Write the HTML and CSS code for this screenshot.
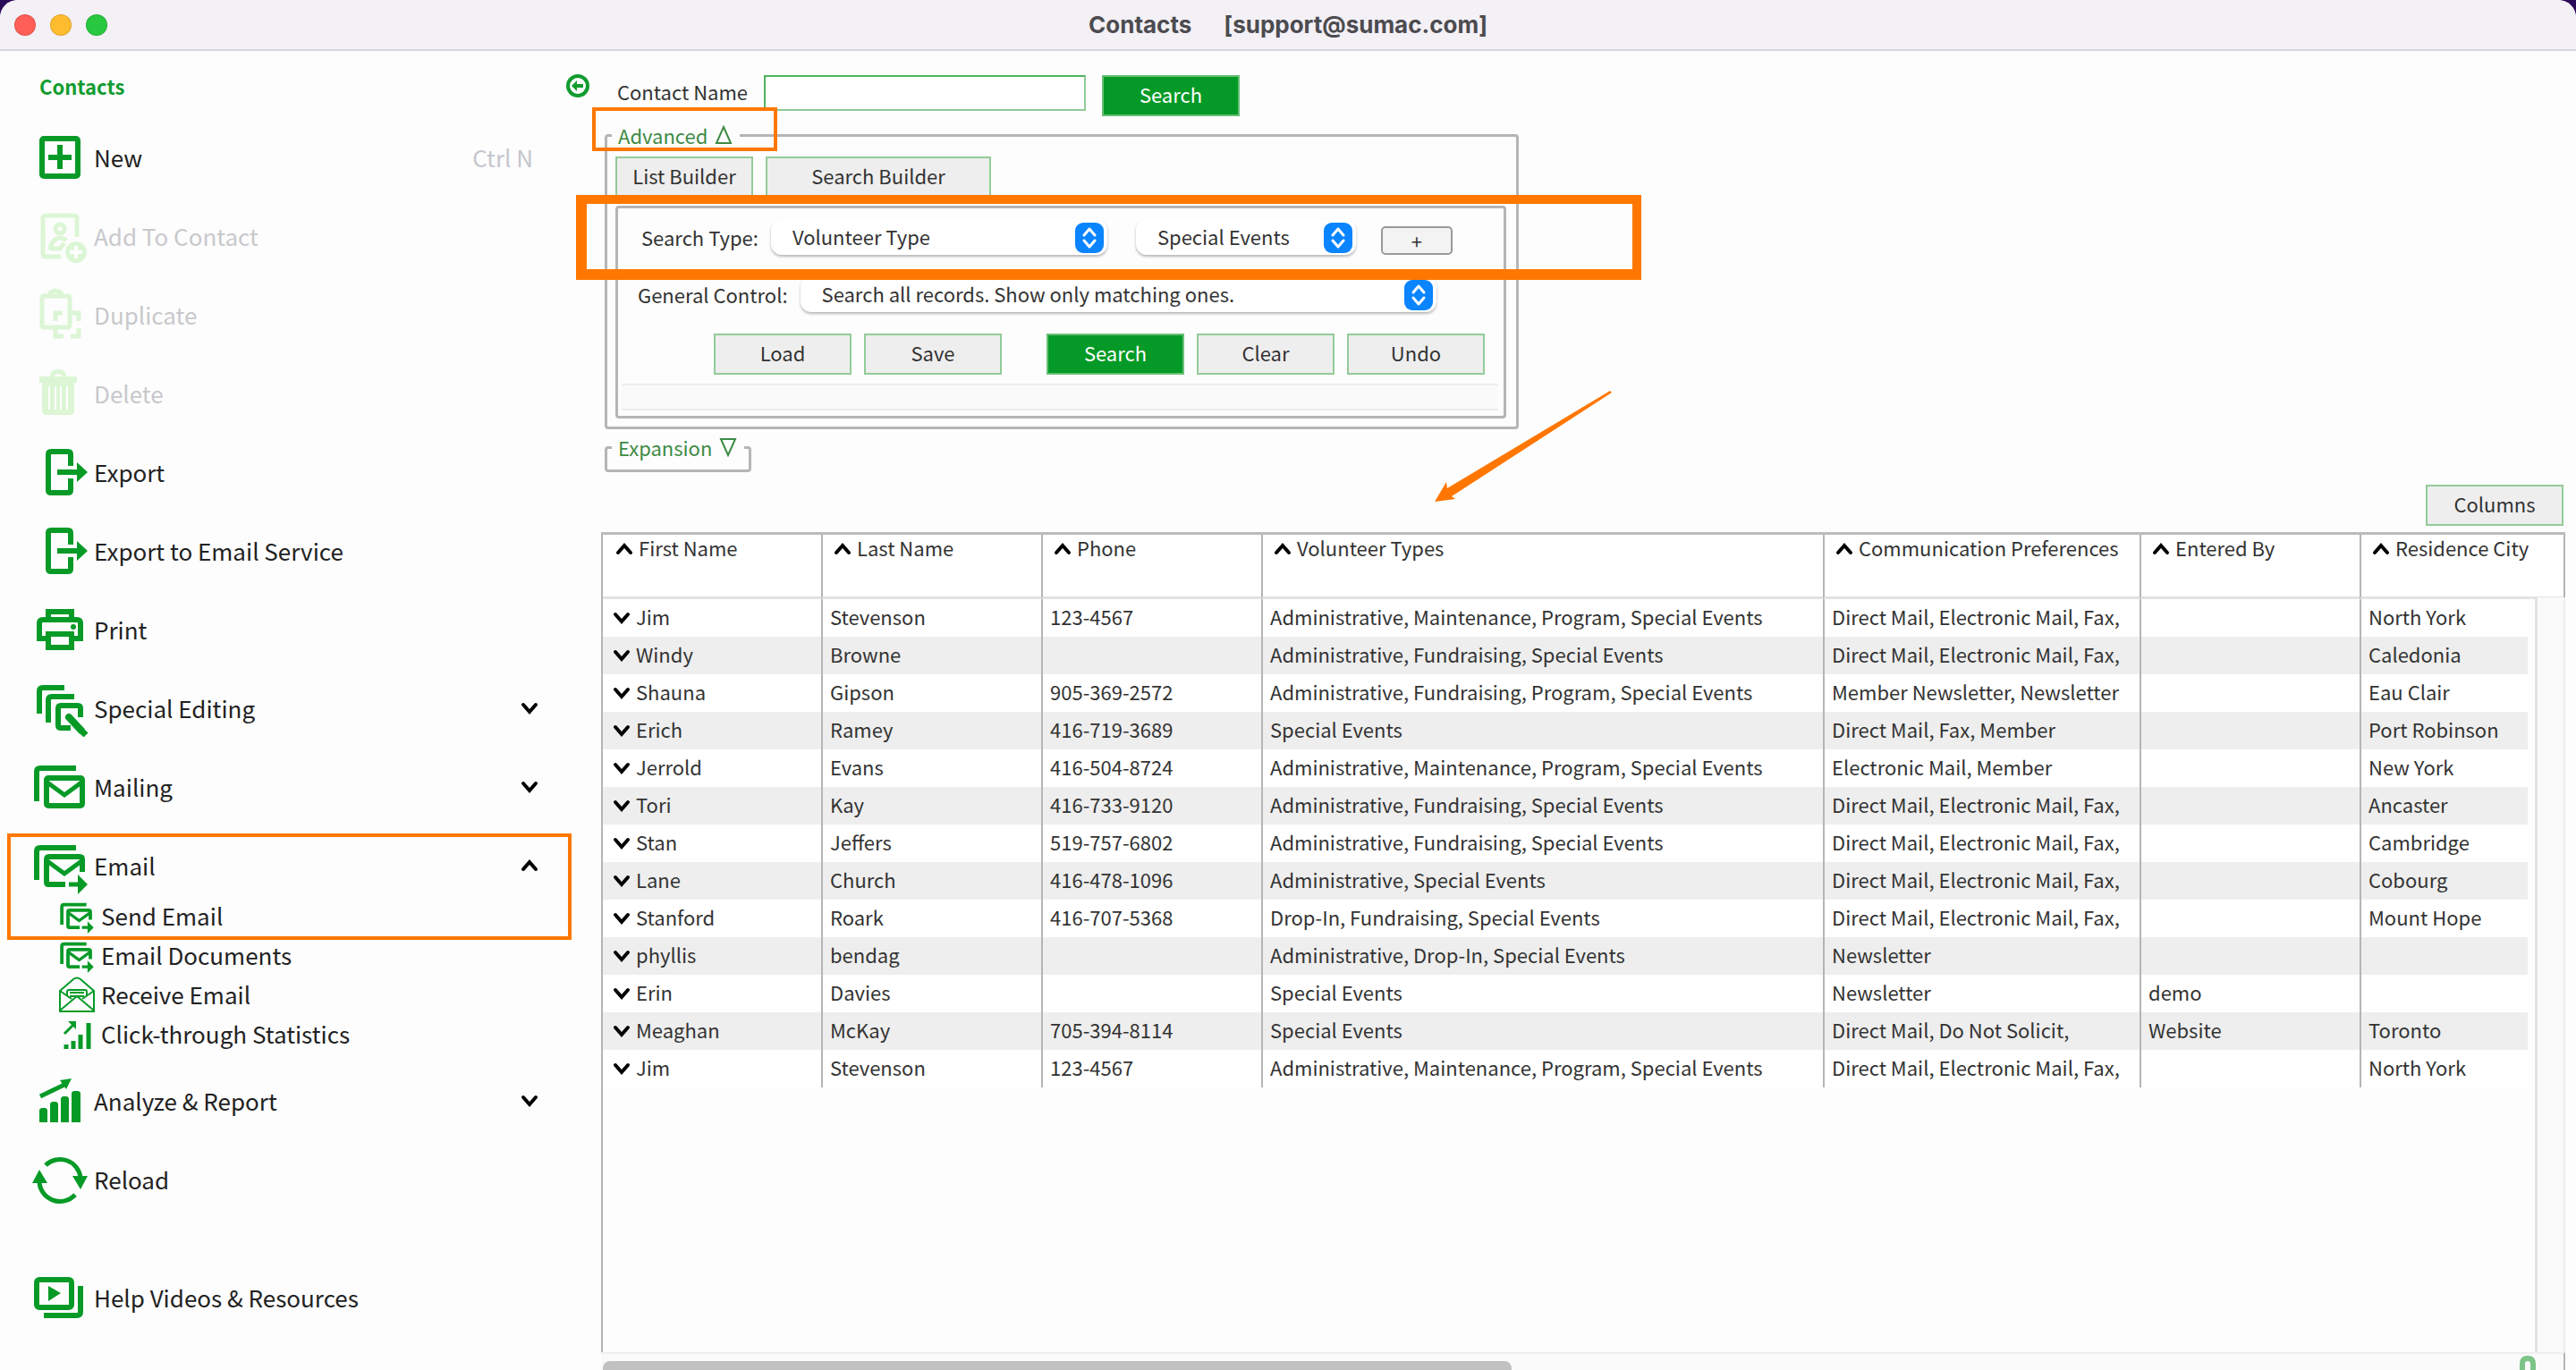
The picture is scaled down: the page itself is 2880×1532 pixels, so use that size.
FILE: index.html
```html
<!DOCTYPE html>
<html lang="en">
<head>
  <meta charset="UTF-8">
  <title>Contacts [support@sumac.com]</title>
  <link rel="stylesheet" href="styles.css">
</head>
<body>
  <!-- shared icons -->
  <svg class="defs" width="0" height="0" aria-hidden="true">
    <symbol id="down" viewBox="0 0 20 16"><path d="M3 4l7 8 7-8" fill="none" stroke="#000" stroke-width="4" stroke-linecap="round"/></symbol>
    <symbol id="up" viewBox="0 0 20 16"><path d="M3 12l7-8 7 8" fill="none" stroke="#000" stroke-width="4" stroke-linecap="round"/></symbol>
    <symbol id="updown" viewBox="0 0 32 34">
      <rect width="32" height="34" rx="9" fill="#0a84ff"/>
      <path d="M10 14l6-7 6 7M10 20l6 7 6-7" fill="none" stroke="#fff" stroke-width="3" stroke-linecap="round" stroke-linejoin="round"/>
    </symbol>
    <symbol id="new" viewBox="0 0 64 64"><rect x="11" y="11" width="40" height="42" rx="2"/><path d="M18 32h26M31 18v27"/></symbol>
    <symbol id="add-contact" viewBox="0 0 64 64">
      <path d="M50 33V12q0-3-3-3H15q-3 0-3 3v40q0 3 3 3h17" stroke-width="5"/>
      <circle cx="31" cy="24" r="5" stroke-width="5"/>
      <path d="M20 47c1-9 7-13 11-13 4 0 5 1 7 3M20 46h11l5-6" stroke-width="5"/>
      <circle cx="49" cy="50" r="12" class="fill"/>
      <path d="M49 43v14M42 50h14" stroke="#fdfdfd" stroke-width="4"/>
    </symbol>
    <symbol id="duplicate" viewBox="0 0 64 64">
      <rect x="11" y="11" width="31" height="35" rx="2" stroke-width="5"/>
      <path d="M19 11q0-5 7-6q7 1 7 6" stroke-width="5"/>
      <path d="M26 39V30h8M44 30h8v9M26 47v9h9M52 47v9h-9" stroke-width="5"/>
    </symbol>
    <symbol id="trash" viewBox="0 0 64 64">
      <path class="fill" d="M8 13h42v7H8zM20 13q0-8 9-8t9 8h-5q0-3-4-3t-4 3zM11 20h36v31q0 5-5 5H16q-5 0-5-5z"/>
      <path d="M19 24v26M26 24v26M32 24v26M39 24v26" stroke="#fff" stroke-width="2"/>
    </symbol>
    <symbol id="export" viewBox="0 0 64 64">
      <path d="M43 25V12q0-3-3-3H21q-3 0-3 3v40q0 3 3 3h19q3 0 3-3V39M28 32h24"/>
      <path class="fill" d="M50 21l12 11-12 11z"/>
    </symbol>
    <symbol id="print" viewBox="0 0 64 64">
      <path d="M18 21V12h26v9M18 42H8V25q0-4 4-4h38q4 0 4 4v17H44"/>
      <rect x="18" y="37" width="26" height="15"/>
      <circle cx="46" cy="29" r="3" class="fill"/>
    </symbol>
    <symbol id="edit" viewBox="0 0 64 64">
      <path d="M8 38V13q0-4 4-4h24M18 48V23q0-4 4-4h25M54 42V32q0-3-3-3H32q-3 0-3 3v19q0 3 3 3h11"/>
      <path d="M41 42l14 15" stroke-width="8" stroke-linecap="round"/><path d="M57 59l3 3" stroke-width="7"/>
    </symbol>
    <symbol id="mail" viewBox="0 0 64 64">
      <path d="M5 48V15q0-4 4-4h40"/>
      <rect x="16" y="22" width="40" height="31" rx="2"/>
      <path d="M17 27l19 14 19-14" stroke-width="5"/>
    </symbol>
    <symbol id="send" viewBox="0 0 64 64">
      <path d="M5 48V16q0-4 4-4h40M37 53H18q-2 0-2-3V25q0-3 3-3h34q3 0 3 3v14"/>
      <path d="M17 27l19 14 19-14M41 53h12" stroke-width="5"/>
      <path class="fill" d="M51 42l11 11-11 11z"/>
    </symbol>
    <symbol id="receive" viewBox="0 0 40 40">
      <g stroke-width="2">
        <path d="M1 16L16 3q4-3 8 0l15 13v23H1zM1 16l13 9M39 16l-13 9M1 38l19-16 19 16"/>
        <path d="M9 21v-4q0-2 2-2h18q2 0 2 2v4M12 18h16M12 22h16"/>
      </g>
    </symbol>
    <symbol id="stats" viewBox="0 0 40 40">
      <path d="M8 37v-5M16 37v-9M24 37V21M33 37V8" stroke-width="5"/>
      <path d="M6 20l10-10" stroke-width="3"/><path class="fill" d="M10 6h9v9z"/>
    </symbol>
    <symbol id="analyze" viewBox="0 0 64 64">
      <path class="fill" d="M8 56V42l2-2h5l2 2v14zM20 56V35l2-2h5l2 2v21zM32 56V29l2-2h5l2 2v27zM44 56V23l2-2h6l2 2v33z"/>
      <path d="M9 27l29-14" stroke-width="5"/><path class="fill" d="M31 9l13-2-6 12z"/>
    </symbol>
    <symbol id="reload" viewBox="0 0 64 64">
      <path d="M15 16A23 23 0 0 1 54 30M8 33a23 23 0 0 0 40 16" stroke-width="5"/>
      <path class="fill" d="M45 28h17l-8 15zM0 36h17L8 21z"/>
    </symbol>
    <symbol id="video" viewBox="0 0 64 64">
      <rect x="5" y="12" width="39" height="31" rx="3"/>
      <path class="fill" d="M18 19l14 8-14 9z"/>
      <path d="M13 52h37q4 0 4-4V19"/>
    </symbol>
  </svg>

  <div class="window">
    <header class="titlebar">
      <div class="lights"><span class="red"></span><span class="yellow"></span><span class="green"></span></div>
      <h1><span>Contacts</span><span>[support@sumac.com]</span></h1>
    </header>

    <div class="layout">
      <nav class="sidebar">
        <h2>Contacts</h2>
        <ul class="menu">
          <li><a href="#"><svg class="icon"><use href="#new"/></svg>New<kbd>Ctrl N</kbd></a></li>
          <li><a href="#" class="disabled"><svg class="icon"><use href="#add-contact"/></svg>Add To Contact</a></li>
          <li><a href="#" class="disabled"><svg class="icon"><use href="#duplicate"/></svg>Duplicate</a></li>
          <li><a href="#" class="disabled"><svg class="icon"><use href="#trash"/></svg>Delete</a></li>
          <li><a href="#"><svg class="icon"><use href="#export"/></svg>Export</a></li>
          <li><a href="#"><svg class="icon"><use href="#export"/></svg>Export to Email Service</a></li>
          <li><a href="#"><svg class="icon"><use href="#print"/></svg>Print</a></li>
          <li><a href="#"><svg class="icon"><use href="#edit"/></svg>Special Editing<svg class="chevron"><use href="#down"/></svg></a></li>
          <li><a href="#"><svg class="icon"><use href="#mail"/></svg>Mailing<svg class="chevron"><use href="#down"/></svg></a></li>
          <li>
            <a href="#"><svg class="icon"><use href="#send"/></svg>Email<svg class="chevron"><use href="#up"/></svg></a>
            <ul class="submenu">
              <li><a href="#"><svg class="icon"><use href="#send"/></svg>Send Email</a></li>
              <li><a href="#"><svg class="icon"><use href="#send"/></svg>Email Documents</a></li>
              <li><a href="#"><svg class="icon"><use href="#receive"/></svg>Receive Email</a></li>
              <li><a href="#"><svg class="icon"><use href="#stats"/></svg>Click-through Statistics</a></li>
            </ul>
          </li>
          <li><a href="#"><svg class="icon"><use href="#analyze"/></svg>Analyze &amp; Report<svg class="chevron"><use href="#down"/></svg></a></li>
          <li><a href="#"><svg class="icon"><use href="#reload"/></svg>Reload</a></li>
          <li class="help"><a href="#"><svg class="icon"><use href="#video"/></svg>Help Videos &amp; Resources</a></li>
        </ul>
      </nav>

      <button class="collapse" type="button" aria-label="Hide menu">
        <svg viewBox="0 0 28 28"><circle cx="14" cy="14" r="11" fill="none" stroke="#119c2f" stroke-width="4"/><path d="M20 14h-9" stroke="#119c2f" stroke-width="4"/><path d="M7 14l6-6v12z" fill="#119c2f"/></svg>
      </button>

      <main class="content">
        <form class="name-search">
          <label for="contactName">Contact Name</label>
          <input type="text" id="contactName">
          <button type="button" class="btn primary">Search</button>
        </form>

        <fieldset class="group advanced">
          <legend>Advanced <svg class="tri" viewBox="0 0 20 22"><path d="M10 2l8 18H2z"/></svg></legend>
          <div class="tabs">
            <button type="button" class="btn">List Builder</button>
            <button type="button" class="btn wide">Search Builder</button>
          </div>
          <div class="panel">
            <div class="line type-line">
              <label for="searchType">Search Type:</label>
              <span class="select type"><select id="searchType"><option>Volunteer Type</option></select><svg><use href="#updown"/></svg></span>
              <span class="select value"><select aria-label="Volunteer type value"><option>Special Events</option></select><svg><use href="#updown"/></svg></span>
              <button type="button" class="plus">+</button>
            </div>
            <div class="line control-line">
              <label for="generalControl">General Control:</label>
              <span class="select control"><select id="generalControl"><option>Search all records. Show only matching ones.</option></select><svg><use href="#updown"/></svg></span>
            </div>
            <div class="actions">
              <button type="button" class="btn">Load</button>
              <button type="button" class="btn">Save</button>
              <button type="button" class="btn primary">Search</button>
              <button type="button" class="btn">Clear</button>
              <button type="button" class="btn">Undo</button>
            </div>
            <div class="strip"></div>
          </div>
        </fieldset>

        <fieldset class="group expansion">
          <legend>Expansion <svg class="tri" viewBox="0 0 20 22"><path d="M10 20L2 2h16z"/></svg></legend>
        </fieldset>

        <button type="button" class="btn columns">Columns</button>

        <div class="grid">
          <div class="grid-body">
            <table class="contacts">
              <thead>
                <tr>
                  <th><svg class="arrow"><use href="#up"/></svg>First Name</th>
                  <th><svg class="arrow"><use href="#up"/></svg>Last Name</th>
                  <th><svg class="arrow"><use href="#up"/></svg>Phone</th>
                  <th class="types"><svg class="arrow"><use href="#up"/></svg>Volunteer Types</th>
                  <th class="prefs"><svg class="arrow"><use href="#up"/></svg>Communication Preferences</th>
                  <th><svg class="arrow"><use href="#up"/></svg>Entered By</th>
                  <th class="city"><svg class="arrow"><use href="#up"/></svg>Residence City</th>
                  <td class="edge"></td>
                </tr>
              </thead>
              <tbody>
                <tr><td><svg class="arrow"><use href="#down"/></svg>Jim</td><td>Stevenson</td><td>123-4567</td><td>Administrative, Maintenance, Program, Special Events</td><td>Direct Mail, Electronic Mail, Fax,</td><td></td><td>North York</td></tr>
                <tr><td><svg class="arrow"><use href="#down"/></svg>Windy</td><td>Browne</td><td></td><td>Administrative, Fundraising, Special Events</td><td>Direct Mail, Electronic Mail, Fax,</td><td></td><td>Caledonia</td></tr>
                <tr><td><svg class="arrow"><use href="#down"/></svg>Shauna</td><td>Gipson</td><td>905-369-2572</td><td>Administrative, Fundraising, Program, Special Events</td><td>Member Newsletter, Newsletter</td><td></td><td>Eau Clair</td></tr>
                <tr><td><svg class="arrow"><use href="#down"/></svg>Erich</td><td>Ramey</td><td>416-719-3689</td><td>Special Events</td><td>Direct Mail, Fax, Member</td><td></td><td>Port Robinson</td></tr>
                <tr><td><svg class="arrow"><use href="#down"/></svg>Jerrold</td><td>Evans</td><td>416-504-8724</td><td>Administrative, Maintenance, Program, Special Events</td><td>Electronic Mail, Member</td><td></td><td>New York</td></tr>
                <tr><td><svg class="arrow"><use href="#down"/></svg>Tori</td><td>Kay</td><td>416-733-9120</td><td>Administrative, Fundraising, Special Events</td><td>Direct Mail, Electronic Mail, Fax,</td><td></td><td>Ancaster</td></tr>
                <tr><td><svg class="arrow"><use href="#down"/></svg>Stan</td><td>Jeffers</td><td>519-757-6802</td><td>Administrative, Fundraising, Special Events</td><td>Direct Mail, Electronic Mail, Fax,</td><td></td><td>Cambridge</td></tr>
                <tr><td><svg class="arrow"><use href="#down"/></svg>Lane</td><td>Church</td><td>416-478-1096</td><td>Administrative, Special Events</td><td>Direct Mail, Electronic Mail, Fax,</td><td></td><td>Cobourg</td></tr>
                <tr><td><svg class="arrow"><use href="#down"/></svg>Stanford</td><td>Roark</td><td>416-707-5368</td><td>Drop-In, Fundraising, Special Events</td><td>Direct Mail, Electronic Mail, Fax,</td><td></td><td>Mount Hope</td></tr>
                <tr><td><svg class="arrow"><use href="#down"/></svg>phyllis</td><td>bendag</td><td></td><td>Administrative, Drop-In, Special Events</td><td>Newsletter</td><td></td><td></td></tr>
                <tr><td><svg class="arrow"><use href="#down"/></svg>Erin</td><td>Davies</td><td></td><td>Special Events</td><td>Newsletter</td><td>demo</td><td></td></tr>
                <tr><td><svg class="arrow"><use href="#down"/></svg>Meaghan</td><td>McKay</td><td>705-394-8114</td><td>Special Events</td><td>Direct Mail, Do Not Solicit,</td><td>Website</td><td>Toronto</td></tr>
                <tr><td><svg class="arrow"><use href="#down"/></svg>Jim</td><td>Stevenson</td><td>123-4567</td><td>Administrative, Maintenance, Program, Special Events</td><td>Direct Mail, Electronic Mail, Fax,</td><td></td><td>North York</td></tr>
              </tbody>
            </table>
            <div class="vscroll"></div>
          </div>
          <div class="hscroll">
            <div class="thumb"></div>
            <svg class="handle" viewBox="0 0 18 24"><path d="M3 24V9q0-6 6-6t6 6v15" fill="none" stroke="#7cc487" stroke-width="6"/></svg>
          </div>
        </div>
      </main>
    </div>

    <!-- callouts -->
    <div class="mark mark-advanced"></div>
    <div class="mark mark-type"></div>
    <div class="mark mark-email"></div>
    <svg class="mark-arrow" viewBox="0 0 198 124"><path d="M196 0L14 109l-1-7L0 124l23-3-4-3L198 2z"/></svg>
  </div>
</body>
</html>
```
FILE: styles.css
```css
* {
  box-sizing: border-box;
}
body {
  margin: 0;
  background: #2c0a5a;
  color: #333;
  font-family: "Noto Sans CJK SC", "Noto Sans", sans-serif;
  font-size: 22px;
  line-height: 32px;
}
button, input, select {
  font: inherit;
  color: inherit;
  padding: 0;
}
ul {
  list-style: none;
  margin: 0;
  padding: 0;
}
svg {
  display: block;
  flex: none;
}
.defs {
  position: absolute;
}
.window {
  position: relative;
  display: flex;
  flex-direction: column;
  height: 100vh;
  overflow: hidden;
  background: #fdfdfd;
  border-radius: 20px 20px 0 0;
}

/* title bar */
.titlebar {
  display: flex;
  align-items: center;
  height: 57px;
  padding: 0 16px;
  background: #f3f0f6;
  border-bottom: 2px solid #d8d5db;
}
.lights {
  display: flex;
  gap: 16px;
  width: 104px;
}
.lights span {
  width: 24px;
  height: 24px;
  border-radius: 50%;
  border: 1px solid rgba(0, 0, 0, 0.12);
}
.red { background: #ff5f57; }
.yellow { background: #febc2e; }
.green { background: #28c840; }
.titlebar h1 {
  display: flex;
  flex: 1;
  justify-content: center;
  gap: 36px;
  margin: 0 104px 0 0;
  font-family: Inter, sans-serif;
  font-size: 26px;
  font-weight: 700;
  color: #4c4b4f;
}

.layout {
  display: flex;
  flex: 1;
  min-height: 0;
}

/* menu */
.sidebar {
  width: 620px;
  padding: 23px 18px 0 36px;
}
.sidebar h2 {
  margin: 0 0 20px;
  padding-left: 8px;
  font-size: 22px;
  color: #119c2f;
}
.menu {
  font-size: 26px;
}
.menu a {
  display: flex;
  align-items: center;
  gap: 5px;
  height: 88px;
  color: #222;
  text-decoration: none;
}
.icon {
  width: 64px;
  height: 64px;
  fill: none;
  stroke: #079a27;
  stroke-width: 6;
  color: #079a27;
}
.fill {
  fill: currentColor;
  stroke: none;
}
.menu .disabled {
  color: #c8c8cc;
}
.disabled .icon {
  stroke: #dcf6d5;
  color: #dcf6d5;
}
.menu kbd {
  margin-left: auto;
  padding-right: 6px;
  font: inherit;
  color: #c4c6cc;
}
.chevron {
  width: 20px;
  height: 16px;
  margin-left: auto;
}
.submenu {
  margin: -10px 0 9px 30px;
}
.submenu a {
  gap: 7px;
  height: 44px;
}
.submenu .icon {
  width: 40px;
  height: 40px;
}
.help {
  margin-top: 44px;
}

.collapse {
  align-self: flex-start;
  margin: 25px 12px 0;
  border: 0;
  background: none;
}
.collapse svg {
  width: 28px;
  height: 28px;
}

/* search area */
.content {
  display: flex;
  flex: 1;
  flex-direction: column;
  min-width: 0;
  padding: 27px 12px 0 0;
}
.name-search {
  display: flex;
  align-items: flex-start;
  padding-left: 18px;
}
.name-search label {
  padding-top: 2px;
}
.name-search input {
  width: 360px;
  height: 40px;
  margin: 0 18px;
  padding: 0 8px;
  border: 2px solid #8fcb97;
  border-top-color: #4fb45f;
  border-left-color: #4fb45f;
  background: #fff;
}
.btn {
  min-width: 154px;
  height: 46px;
  padding-bottom: 4px;
  border: 2px solid #93cb98;
  background: #eee;
}
.btn.wide {
  min-width: 252px;
}
.btn.primary {
  border-color: #6abf76;
  background: #059a27;
  color: #fff;
}
.group {
  min-width: 0;
  margin: 5px 0 0 4px;
  padding: 8px 11px 9px 9px;
  border: 3px solid #b5b5b5;
  border-radius: 4px;
}
.group legend {
  display: flex;
  align-items: center;
  gap: 8px;
  padding: 0 8px 0 7px;
  margin-left: -4px;
  color: #3d8b45;
}
.tri {
  width: 20px;
  height: 22px;
  fill: none;
  stroke: #3d8b45;
  stroke-width: 2;
}
.advanced {
  width: 1022px;
}
.tabs {
  display: flex;
  gap: 14px;
}
.panel {
  margin-top: 9px;
  padding: 12px 6px 6px 4px;
  border: 3px solid #b5b5b5;
  border-radius: 4px;
}
.line {
  display: flex;
  align-items: center;
  height: 40px;
  margin-bottom: 24px;
}
.type-line {
  padding-left: 22px;
}
.control-line {
  padding-left: 18px;
}
.line label {
  margin-right: 14px;
}
.select {
  position: relative;
  height: 40px;
}
.select select {
  width: 100%;
  height: 40px;
  padding: 0 40px 2px 24px;
  border: 0;
  border-radius: 12px;
  background: #fff;
  box-shadow: 0 2px 3px rgba(0, 0, 0, 0.28);
  appearance: none;
}
.select svg {
  position: absolute;
  top: 4px;
  right: 4px;
  width: 32px;
  height: 34px;
  pointer-events: none;
}
.select.type {
  width: 376px;
  margin-right: 32px;
}
.select.value {
  width: 246px;
  margin-right: 28px;
}
.select.control {
  width: 711px;
}
.plus {
  width: 80px;
  height: 32px;
  margin-top: 8px;
  border: 2px solid #999;
  border-radius: 5px;
  background: #f3f3f3;
  line-height: 24px;
}
.actions {
  display: flex;
  gap: 14px;
  padding-left: 103px;
}
.actions .primary {
  margin-left: 36px;
}
.strip {
  height: 30px;
  margin-top: 10px;
  border: 2px solid #eee;
  border-width: 2px 0;
  background: #fafafa;
}
.expansion {
  align-self: flex-start;
  margin-top: 4px;
  padding: 0 5px 9px 9px;
}
.columns {
  align-self: flex-end;
  margin: 14px 2px 7px 0;
}

/* results */
.grid {
  display: flex;
  flex: 1;
  flex-direction: column;
  min-height: 0;
}
.grid-body {
  position: relative;
  flex: 1;
  border-top: 3px solid #bbb;
  border-left: 2px solid #b5b5b5;
}
.contacts {
  width: 100%;
  table-layout: fixed;
  border-spacing: 0;
}
.contacts th, .contacts td {
  width: 246px;
  height: 42px;
  padding: 0 0 4px 8px;
  border-left: 2px solid #b5b5b5;
  line-height: 28px;
  text-align: left;
  white-space: nowrap;
}
.contacts th {
  height: 72px;
  padding: 0 0 0 12px;
  border-bottom: 3px solid #e2e2e2;
  background: #fff;
  font-weight: normal;
  vertical-align: top;
}
.contacts th:first-child {
  width: 244px;
  padding-left: 14px;
  border-left: 0;
}
.contacts td:first-child {
  padding-left: 11px;
  border-left: 0;
}
.contacts .types { width: 628px; }
.contacts .prefs { width: 354px; }
.contacts .city { width: auto; }
.contacts .edge {
  width: 42px;
  padding: 0;
  border-left: 0;
  border-right: 2px solid #b5b5b5;
  border-bottom: 3px solid #e2e2e2;
  background: #fff;
}
.contacts tbody td {
  background: #fff;
}
.contacts tbody tr:nth-child(even) td {
  background: #eee;
}
.arrow {
  display: inline-block;
  width: 20px;
  height: 16px;
  margin-right: 6px;
}
.vscroll {
  position: absolute;
  top: 70px;
  right: 0;
  bottom: 0;
  width: 34px;
  border-left: 3px solid #e2e2e2;
  border-right: 2px solid #eee;
  background: #fafafa;
}
.hscroll {
  display: flex;
  justify-content: space-between;
  height: 20px;
  padding: 0 31px 0 2px;
  border-top: 2px solid #eee;
  border-right: 2px solid #b5b5b5;
  background: #fafafa;
}
.thumb {
  width: 47%;
  height: 20px;
  margin-top: 8px;
  border-radius: 8px;
  background: #c1c1c1;
}
.handle {
  width: 18px;
  height: 24px;
  margin-top: 2px;
}

/* callouts */
.mark {
  position: absolute;
  border: 4px solid #ff7700;
  pointer-events: none;
}
.mark-advanced {
  left: 662px;
  top: 120px;
  width: 207px;
  height: 49px;
}
.mark-type {
  left: 644px;
  top: 218px;
  width: 1191px;
  height: 95px;
  border-width: 10px 10px 12px 12px;
}
.mark-email {
  left: 8px;
  top: 932px;
  width: 631px;
  height: 119px;
}
.mark-arrow {
  position: absolute;
  left: 1604px;
  top: 437px;
  width: 198px;
  height: 124px;
  fill: #ff7700;
}
```
